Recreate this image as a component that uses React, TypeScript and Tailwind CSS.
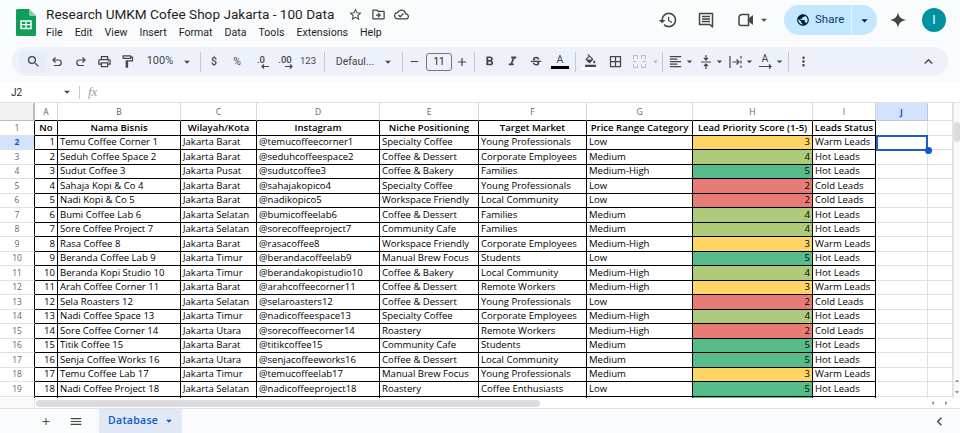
import React from "react";
import {
  MdSearch, MdOutlineLocalPrintshop, MdOutlineFormatPaint, MdArrowDropDown, MdRemove, MdAdd,
  MdFormatBold, MdFormatItalic, MdStrikethroughS, MdOutlineFormatColorFill, MdBorderAll, MdFormatAlignLeft,
  MdMoreVert, MdExpandLess, MdStarBorder, MdOutlineDriveFileMove, MdOutlineCloudDone,
  MdHistory, MdPublic, MdMenu, MdChevronLeft, MdArrowDropUp,
} from "react-icons/md";

const rows: [string, string, string, string, string, string, number, string][] = [
  ["Temu Coffee Corner 1", "Jakarta Barat", "@temucoffeecorner1", "Specialty Coffee", "Young Professionals", "Low", 3, "Warm Leads"],
  ["Seduh Coffee Space 2", "Jakarta Barat", "@seduhcoffeespace2", "Coffee & Dessert", "Corporate Employees", "Medium", 4, "Hot Leads"],
  ["Sudut Coffee 3", "Jakarta Pusat", "@sudutcoffee3", "Coffee & Bakery", "Families", "Medium-High", 5, "Hot Leads"],
  ["Sahaja Kopi & Co 4", "Jakarta Barat", "@sahajakopico4", "Specialty Coffee", "Young Professionals", "Low", 2, "Cold Leads"],
  ["Nadi Kopi & Co 5", "Jakarta Barat", "@nadikopico5", "Workspace Friendly", "Local Community", "Low", 2, "Cold Leads"],
  ["Bumi Coffee Lab 6", "Jakarta Selatan", "@bumicoffeelab6", "Coffee & Dessert", "Families", "Medium", 4, "Hot Leads"],
  ["Sore Coffee Project 7", "Jakarta Selatan", "@sorecoffeeproject7", "Community Cafe", "Families", "Medium", 4, "Hot Leads"],
  ["Rasa Coffee 8", "Jakarta Barat", "@rasacoffee8", "Workspace Friendly", "Corporate Employees", "Medium-High", 3, "Warm Leads"],
  ["Beranda Coffee Lab 9", "Jakarta Timur", "@berandacoffeelab9", "Manual Brew Focus", "Students", "Low", 5, "Hot Leads"],
  ["Beranda Kopi Studio 10", "Jakarta Timur", "@berandakopistudio10", "Coffee & Bakery", "Local Community", "Medium-High", 4, "Hot Leads"],
  ["Arah Coffee Corner 11", "Jakarta Barat", "@arahcoffeecorner11", "Coffee & Dessert", "Remote Workers", "Medium-High", 3, "Warm Leads"],
  ["Sela Roasters 12", "Jakarta Selatan", "@selaroasters12", "Coffee & Dessert", "Young Professionals", "Low", 2, "Cold Leads"],
  ["Nadi Coffee Space 13", "Jakarta Timur", "@nadicoffeespace13", "Specialty Coffee", "Corporate Employees", "Medium-High", 4, "Hot Leads"],
  ["Sore Coffee Corner 14", "Jakarta Utara", "@sorecoffeecorner14", "Roastery", "Remote Workers", "Medium-High", 2, "Cold Leads"],
  ["Titik Coffee 15", "Jakarta Barat", "@titikcoffee15", "Community Cafe", "Students", "Medium", 5, "Hot Leads"],
  ["Senja Coffee Works 16", "Jakarta Utara", "@senjacoffeeworks16", "Coffee & Dessert", "Local Community", "Medium", 5, "Hot Leads"],
  ["Temu Coffee Lab 17", "Jakarta Timur", "@temucoffeelab17", "Manual Brew Focus", "Young Professionals", "Medium", 3, "Warm Leads"],
  ["Nadi Coffee Project 18", "Jakarta Selatan", "@nadicoffeeproject18", "Roastery", "Coffee Enthusiasts", "Low", 5, "Hot Leads"],
];

const headers = ["No", "Nama Bisnis", "Wilayah/Kota", "Instagram", "Niche Positioning", "Target Market", "Price Range Category", "Lead Priority Score (1-5)", "Leads Status"];
const letters = ["A", "B", "C", "D", "E", "F", "G", "H", "I"];
const scoreBg: Record<number, string> = { 2: "bg-[#e67c73]", 3: "bg-[#ffd666]", 4: "bg-[#aecb7c]", 5: "bg-[#57bb8a]" };

const Cell = ({ children, className = "" }: { children?: React.ReactNode; className?: string }) => (
  <div className={`border-r border-b border-black px-[2px] flex items-center overflow-hidden whitespace-nowrap min-w-0 ${className}`}>{children}</div>
);
const RowHead = ({ n, active }: { n?: number; active?: boolean }) => (
  <div className={`border-r border-r-black border-b border-b-[#e1e1e1] flex items-center justify-center text-[8.5px] ${active ? "bg-[#d3e3fd] text-[#0b57d0] font-bold" : "bg-white text-[#666]"}`}>{n}</div>
);
const Blank = () => <div className="border-r border-b border-[#e1e1e1]" />;

const Ico = ({ w, children }: { w: string; children?: React.ReactNode }) => (
  <div className={`${w} h-full shrink-0 flex items-center justify-center text-[#444746]`}>{children}</div>
);
const Sep = () => <div className="w-px h-[20px] bg-[#c7c7c7] shrink-0" />;
const Gap = ({ w }: { w: string }) => <div className={`${w} shrink-0`} />;
const Caret = ({ w = "w-[4px]", muted }: { w?: string; muted?: boolean }) => (
  <Ico w={w}><MdArrowDropDown size={13} className={`shrink-0 ${muted ? "text-[#b8bcc0]" : ""}`} /></Ico>
);

const SheetsLogo = () => (
  <svg width="20" height="27" viewBox="0 0 20 27" className="shrink-0">
    <path d="M1.500 0H13l7 7v18.500a1.500 1.500 0 0 1-1.500 1.500h-17A1.500 1.500 0 0 1 0 25.500v-24A1.500 1.500 0 0 1 1.500 0z" fill="#0f9d58" />
    <path d="M13 0l7 7h-5.500A1.500 1.500 0 0 1 13 5.500z" fill="#87ceac" />
    <path d="M5 12h10v7.500H5z" fill="none" stroke="#fff" strokeWidth="1.500" />
    <path d="M5 15.700h10M10 12v7.500" stroke="#fff" strokeWidth="1.300" />
  </svg>
);

const stroke = { fill: "none", stroke: "#444746", strokeWidth: 1.2 } as const;

export default function App() {
  return (
    <div className="w-[960px] h-[433px] overflow-hidden bg-[#f9fbfd] flex flex-col font-['Open_Sans',sans-serif] text-black">
      {/* Title bar */}
      <div className="h-[44px] shrink-0 flex pl-[16px] pr-[14px] items-start">
        <div className="pt-[9px] w-[30px] shrink-0"><SheetsLogo /></div>
        <div className="pt-[5px] flex flex-col">
          <div className="flex items-center h-[18px]">
            <span className="text-[13.6px] leading-[18px] text-[#1f1f1f] font-['Roboto',sans-serif]">Research UMKM Cofee Shop Jakarta - 100 Data</span>
            <div className="flex items-center gap-[8px] ml-[14px] text-[#444746]">
              <MdStarBorder size={15} />
              <MdOutlineDriveFileMove size={15} />
              <MdOutlineCloudDone size={15} />
            </div>
          </div>
          <div className="flex gap-[12px] text-[10.6px] leading-[14px] mt-[3px] text-[#1f1f1f] font-['Roboto',sans-serif]">
            {["File", "Edit", "View", "Insert", "Format", "Data", "Tools", "Extensions", "Help"].map((m) => <span key={m}>{m}</span>)}
          </div>
        </div>
        <div className="ml-auto flex items-center h-[40px] text-[#444746]">
          <MdHistory size={20} />
          <svg width="16" height="16" viewBox="0 0 16 16" className="ml-[20px]">
            <path d="M1.500 1.500h13V15l-2.500-2.500H1.500z" fill="none" stroke="#444746" strokeWidth="1.500" strokeLinejoin="round" />
            <path d="M4 4.500h8M4 7h8M4 9.500h8" stroke="#444746" strokeWidth="1.300" />
          </svg>
          <svg width="16" height="14" viewBox="0 0 16 14" className="ml-[24px]">
            <path d="M4 1.500h6.500v11H3a2 2 0 0 1-2-2V4.500a3 3 0 0 1 3-3z" fill="none" stroke="#444746" strokeWidth="1.500" />
            <path d="M11 5l4-3v10l-4-3z" fill="#444746" />
          </svg>
          <MdArrowDropDown size={14} className="ml-[3px]" />
          <div className="ml-[13px] h-[30px] w-[93px] rounded-full bg-[#c2e7ff] flex items-center text-[#001d35]">
            <div className="w-[68px] h-full flex items-center pl-[12px] gap-[5px] border-r border-[#e6f4fd]">
              <MdPublic size={14} />
              <span className="text-[11.5px] font-['Roboto',sans-serif] text-[#0b3e66]">Share</span>
            </div>
            <div className="flex-1 flex justify-center"><MdArrowDropDown size={15} /></div>
          </div>
          <svg width="16" height="16" viewBox="0 0 16 16" className="ml-[13px]"><path d="M8 0c.6 4.500 3 7.200 8 8-5 .8-7.400 3.500-8 8-.6-4.500-3-7.200-8-8 5-.8 7.400-3.500 8-8z" fill="#444746" /></svg>
          <div className="ml-[16px] w-[24px] h-[24px] rounded-full bg-[#00939f] text-white flex items-center justify-center text-[12px] font-['Roboto',sans-serif]">I</div>
        </div>
      </div>
      {/* Toolbar */}
      <div className="h-[38px] shrink-0 px-[12px] pt-[3px]">
        <div className="h-[29px] w-[936px] rounded-full bg-[#edf2fa] flex items-center pl-[7px] text-[10px] text-[#444746] font-['Roboto',sans-serif]">
          <div className="w-[28px] h-[22px] bg-[#e6edf8] rounded-l-[6px] flex items-center justify-center shrink-0"><MdSearch size={15} /></div>
          <Ico w="w-[20px]"><svg width="12" height="12" viewBox="0 0 12 12" {...stroke}><path d="M4.500 1.500L2 4l2.500 2.500M2 4h5.500a2.700 2.700 0 0 1 0 5.500H3" /></svg></Ico>
          <Ico w="w-[28px]"><svg width="12" height="12" viewBox="0 0 12 12" {...stroke}><path d="M7.500 1.500L10 4 7.500 6.500M10 4H4.500a2.700 2.700 0 0 0 0 5.500H9" /></svg></Ico>
          <Ico w="w-[18px]"><MdOutlineLocalPrintshop size={15} className="shrink-0" /></Ico>
          <Ico w="w-[28px]"><MdOutlineFormatPaint size={15} /></Ico>
          <Ico w="w-[38px]"><span className="text-[11px]">100%</span></Ico>
          <Ico w="w-[16px]"><MdArrowDropDown size={14} /></Ico>
          <Gap w="w-[5px]" />
          <Sep />
          <Ico w="w-[26px]"><span className="text-[10.5px] font-medium">$</span></Ico>
          <Ico w="w-[20px]"><span className="text-[10.5px]">%</span></Ico>
          <Ico w="w-[28px]">
            <div className="flex flex-col items-center leading-none">
              <span className="text-[9.5px] font-medium leading-[9px]">.0</span>
              <svg width="8" height="5" viewBox="0 0 8 5" className="ml-[7px]" {...stroke}><path d="M8 2.500H1M3 .5L1 2.500l2 2" /></svg>
            </div>
          </Ico>
          <Ico w="w-[20px]">
            <div className="flex flex-col items-center leading-none shrink-0">
              <span className="text-[9.5px] font-medium leading-[9px]">.00</span>
              <svg width="8" height="5" viewBox="0 0 8 5" className="ml-[8px]" {...stroke}><path d="M0 2.500h7M5 .5l2 2-2 2" /></svg>
            </div>
          </Ico>
          <Ico w="w-[26px]"><span className="text-[9.5px]">123</span></Ico>
          <Gap w="w-[3px]" />
          <Sep />
          <div className="w-[56px] h-full shrink-0 pl-[4px] flex items-center justify-center"><span className="text-[10.5px]">Defaul...</span></div>
          <Ico w="w-[14px]"><MdArrowDropDown size={14} /></Ico>
          <Gap w="w-[7px]" />
          <Sep />
          <Ico w="w-[23px]"><MdRemove size={13} /></Ico>
          <div className="w-[26px] h-[18px] border border-[#747775] rounded-[3px] flex items-center justify-center text-[10px] text-[#1f1f1f] shrink-0">11</div>
          <Ico w="w-[19px]"><MdAdd size={14} /></Ico>
          <Gap w="w-[3px]" />
          <Sep />
          <Ico w="w-[28px]"><MdFormatBold size={15} /></Ico>
          <Ico w="w-[18px]"><MdFormatItalic size={15} /></Ico>
          <Ico w="w-[30px]"><MdStrikethroughS size={14} /></Ico>
          <Ico w="w-[18px]">
            <div className="flex flex-col items-center"><span className="text-[10.5px] leading-[11px]">A</span><div className="w-[18px] h-[3px] bg-black mt-[1px]" /></div>
          </Ico>
          <Gap w="w-[6px]" />
          <Sep />
          <Ico w="w-[28px]">
            <div className="flex flex-col items-center"><MdOutlineFormatColorFill size={13} /><div className="w-[18px] h-[3px] bg-white" /></div>
          </Ico>
          <Ico w="w-[22px]"><MdBorderAll size={15} /></Ico>
          <Ico w="w-[26px]"><svg width="13" height="13" viewBox="0 0 13 13" fill="none" stroke="#b8bcc0" strokeWidth="1"><path d="M.5 4V.5h4v3M12.500 4V.5h-4v3M.5 9v3.500h4v-3M12.500 9v3.500h-4v-3M0 6.500h3M13 6.500h-3" /></svg></Ico>
          <Caret w="w-[6px]" muted />
          <Gap w="w-[4px]" />
          <Sep />
          <Ico w="w-[24px]"><MdFormatAlignLeft size={15} /></Ico>
          <Caret />
          <Gap w="w-[4px]" />
          <Ico w="w-[22px]"><svg width="12" height="14" viewBox="0 0 12 14" {...stroke}><path d="M1 7h10M6 0v4.500M4 3l2 2 2-2M6 14V9.500M4 11l2-2 2 2" /></svg></Ico>
          <Caret />
          <Gap w="w-[1px]" />
          <Ico w="w-[26px]"><svg width="13" height="12" viewBox="0 0 13 12" {...stroke}><path d="M1 0v12M12 0v2.500M12 4.500v3M12 9.500V12M3.500 6h6M7.500 3.500L10 6 7.500 8.500" /></svg></Ico>
          <Caret w="w-[2px]" />
          <Gap w="w-[2px]" />
          <Ico w="w-[26px]">
            <div className="flex flex-col items-center leading-none">
              <span className="text-[10.5px] leading-[10px]">A</span>
              <svg width="13" height="5" viewBox="0 0 13 5" {...stroke}><path d="M0 2.500h12M10 .5l2 2-2 2" /></svg>
            </div>
          </Ico>
          <Caret w="w-[2px]" />
          <Gap w="w-[8px]" />
          <Sep />
          <Ico w="w-[29px]"><MdMoreVert size={15} /></Ico>
          <div className="ml-auto mr-[11px] text-[#444746]"><MdExpandLess size={17} /></div>
        </div>
      </div>
      {/* Formula bar */}
      <div className="h-[21px] shrink-0 bg-white flex items-center border-b border-[#e1e1e1] text-[10px] text-[#1f1f1f] font-['Roboto',sans-serif]">
        <span className="ml-[11px] w-[49px]">J2</span>
        <MdArrowDropDown size={14} className="text-[#444746]" />
        <div className="ml-[5px] w-px h-[13px] bg-[#c7c7c7]" />
        <span className="ml-[8px] italic font-['Liberation_Serif',serif] text-[13px] text-[#9aa0a6]">fx</span>
      </div>
      {/* Grid */}
      <div className="h-[295px] shrink-0 overflow-hidden bg-white flex relative">
        <div className="flex-1 grid grid-cols-[35px_23px_123px_76px_123px_99px_108px_106px_120px_63px_52px_25px] grid-rows-[18px_repeat(20,14.5px)] text-[9.55px] leading-[14px] font-['Open_Sans',sans-serif]">
          <div className="bg-[#f3f3f3] border-r-[2px] border-r-[#bdbdbd] border-b border-b-[#bdbdbd]" />
          {letters.map((l) => (
            <div key={l} className="border-r border-r-[#d9d9d9] border-b border-b-black flex items-center justify-center text-[8.5px] text-[#666]">{l}</div>
          ))}
          <div className="bg-[#d3e3fd] border-r border-b border-[#c7c7c7] flex items-center justify-center text-[8.5px] font-bold text-[#0b57d0]">J</div>
          <div className="border-r border-b border-[#e1e1e1]" />

          <RowHead n={1} />
          {headers.map((h) => <Cell key={h} className="justify-center font-semibold">{h}</Cell>)}
          <Blank /><Blank />

          {rows.map((r, i) => (
            <React.Fragment key={i}>
              <RowHead n={i + 2} active={i === 0} />
              <Cell className="justify-end">{i + 1}</Cell>
              <Cell>{r[0]}</Cell>
              <Cell>{r[1]}</Cell>
              <Cell>{r[2]}</Cell>
              <Cell>{r[3]}</Cell>
              <Cell>{r[4]}</Cell>
              <Cell>{r[5]}</Cell>
              <Cell className={`justify-end ${scoreBg[r[6]]}`}>{r[6]}</Cell>
              <Cell>{r[7]}</Cell>
              <Blank /><Blank />
            </React.Fragment>
          ))}
          <RowHead />
          {letters.map((l) => <Cell key={l} className={l === "H" ? "bg-[#57bb8a]" : ""} />)}
          <Blank /><Blank />
        </div>
        <div className="w-[7px] shrink-0 bg-[#fafafa] border-l border-[#e8e8e8] flex flex-col items-center">
          <div className="w-[6px] h-[20px] mt-[19px] rounded-[3px] bg-[#dadce0]" />
          <MdArrowDropUp size={10} className="mt-auto mb-[1px] text-[#777] shrink-0" />
          <MdArrowDropDown size={10} className="mb-[1px] text-[#777] shrink-0" />
        </div>
        {/* selection overlay */}
        <div className="absolute left-[876px] top-[32px] w-[52px] h-[16px] border-2 border-[#1a5fc8]" />
        <div className="absolute left-[925px] top-[44px] w-[7px] h-[7px] rounded-full bg-[#0b57d0]" />
      </div>
      {/* Horizontal scrollbar */}
      <div className="h-[11px] shrink-0 bg-white border-b border-[#e1e1e1] flex items-center">
        <div className="w-[35px] h-full bg-[#f8f9fa] border-r border-[#e8e8e8]" />
        <div className="ml-[1px] w-[504px] h-[7px] rounded-full bg-[#dadce0]" />
        <div className="ml-auto flex items-center gap-[3px] mr-[9px] text-[#777]">
          <MdArrowDropDown size={10} className="rotate-90" />
          <MdArrowDropDown size={10} className="-rotate-90" />
        </div>
      </div>
      {/* Tabs */}
      <div className="flex-1 flex items-stretch pl-[40px] text-[#444746]">
        <div className="w-[12px] flex items-center"><MdAdd size={13} /></div>
        <div className="ml-[17px] w-[14px] flex items-center"><MdMenu size={15} /></div>
        <div className="ml-[16px] w-[83px] bg-[#e1e9f7] flex items-center pl-[9px] gap-[4px] text-[#0b57d0] text-[10.5px] font-semibold tracking-[0.3px]">
          <span>Database</span>
          <MdArrowDropDown size={14} />
        </div>
        <div className="ml-auto mr-[12px] flex items-center"><MdChevronLeft size={17} /></div>
      </div>
    </div>
  );
}
